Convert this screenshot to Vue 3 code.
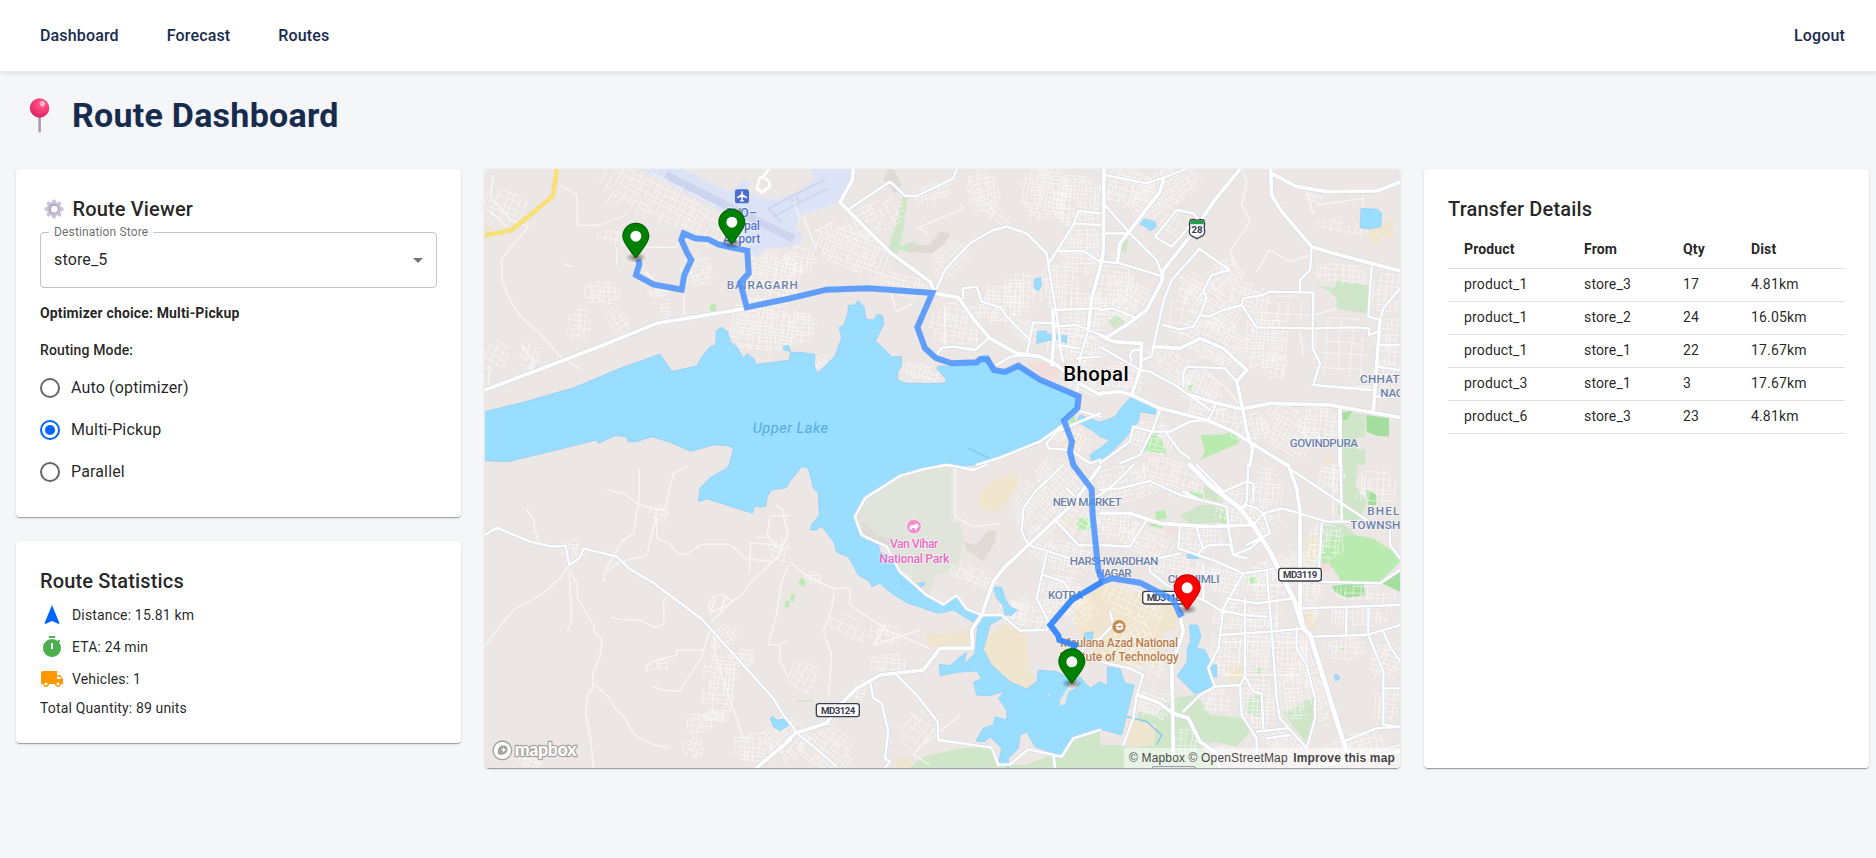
<script setup>
import { ref } from 'vue'

const mode = ref('multi')
const modes = [
  { id: 'auto', label: 'Auto (optimizer)' },
  { id: 'multi', label: 'Multi-Pickup' },
  { id: 'parallel', label: 'Parallel' },
]

const transfers = [
  ['product_1', 'store_3', '17', '4.81km'],
  ['product_1', 'store_2', '24', '16.05km'],
  ['product_1', 'store_1', '22', '17.67km'],
  ['product_3', 'store_1', '3', '17.67km'],
  ['product_6', 'store_3', '23', '4.81km'],
]

const pins = [
  { x: 427, y: 173, color: '#008000' },
  { x: 715, y: 131, color: '#008000' },
  { x: 1735, y: 1450, color: '#008000' },
  { x: 2081, y: 1228, color: '#ff0000' },
]

// Built-up areas: centre x, centre y, width, height, rotation in degrees, block size
const districts = [
  [560, 120, 420, 130, 27, 19], [75, 120, 120, 80, 20, 24], [400, 220, 90, 40, 10, 20],
  [370, 385, 110, 60, 4, 13], [650, 320, 90, 90, -15, 14], [540, 378, 70, 34, -12, 11],
  [415, 470, 90, 50, 60, 15], [560, 435, 28, 60, 3, 12], [300, 480, 70, 90, 5, 17],
  [55, 570, 70, 70, 30, 20], [150, 575, 60, 70, 20, 20],
  [850, 480, 190, 150, 8, 13], [885, 330, 160, 120, 15, 12], [965, 490, 80, 90, 5, 12],
  [1120, 260, 220, 120, 20, 14], [1180, 165, 190, 90, -25, 17], [960, 290, 90, 80, 10, 15],
  [1360, 85, 110, 50, -15, 15], [1510, 80, 90, 130, -12, 14], [1540, 140, 120, 40, 40, 16],
  [1260, 360, 160, 60, 14, 14], [1410, 285, 120, 90, -45, 14], [1430, 480, 150, 120, 10, 16],
  [1560, 420, 120, 110, 3, 13], [1620, 390, 90, 120, 1, 14], [1700, 85, 140, 150, 10, 11],
  [1790, 110, 140, 150, 5, 11], [1810, 260, 130, 130, 2, 13], [1740, 370, 110, 130, 4, 14],
  [1820, 450, 130, 130, 2, 14], [1790, 540, 170, 90, 8, 12], [1820, 640, 120, 90, 20, 11],
  [1320, 625, 110, 50, 20, 13], [1020, 600, 35, 60, 30, 10], [1640, 500, 90, 60, 30, 12],
  [1770, 820, 130, 80, 30, 14], [1940, 70, 160, 110, 15, 13], [2050, 75, 230, 110, -30, 11],
  [2080, 180, 110, 80, 33, 22], [1900, 380, 140, 150, 4, 13], [1960, 420, 110, 120, 30, 15],
  [1930, 640, 120, 90, 6, 12], [2110, 450, 80, 150, 10, 34], [2140, 370, 90, 80, 30, 15],
  [2240, 330, 110, 90, -30, 14], [2200, 430, 170, 110, 35, 12], [2310, 400, 120, 80, 18, 13],
  [2210, 530, 200, 120, 25, 13], [2360, 530, 120, 170, 4, 12], [2080, 600, 160, 80, 35, 14],
  [2160, 670, 120, 90, 25, 13], [2420, 440, 150, 90, 2, 42], [2390, 610, 60, 70, 10, 13],
  [2580, 560, 150, 200, 4, 44], [2590, 330, 160, 60, 4, 16], [2720, 380, 80, 130, 5, 16],
  [2720, 580, 70, 230, 5, 15], [2020, 820, 130, 90, 15, 14], [2310, 790, 110, 80, -10, 15],
  [2430, 800, 170, 120, 30, 13], [2520, 780, 120, 100, 5, 14], [2200, 740, 140, 70, 15, 14],
  [2600, 190, 180, 30, 10, 26], [2500, 95, 50, 40, 20, 14],
  [1240, 1240, 130, 60, 30, 17], [1480, 1235, 140, 50, 20, 14], [1000, 1240, 50, 40, 5, 17],
  [1110, 1390, 120, 60, 25, 26], [1220, 1410, 100, 60, 15, 18], [1230, 1500, 110, 60, 5, 15],
  [970, 1540, 90, 90, 30, 22], [1140, 1575, 40, 60, 20, 15],
  [1040, 1750, 160, 130, 38, 14], [920, 1720, 130, 110, 38, 14], [1310, 1700, 80, 110, 40, 22],
  [820, 1750, 110, 90, 5, 14], [720, 1560, 100, 170, 5, 18], [660, 1680, 80, 60, 5, 15],
  [710, 1655, 80, 26, 8, 9], [730, 1420, 60, 90, 55, 13], [790, 1480, 80, 50, 10, 15],
  [900, 1155, 70, 70, 20, 17], [540, 1045, 60, 50, 20, 15], [280, 1160, 70, 70, 5, 17],
  [150, 1790, 70, 40, 20, 12], [640, 1750, 60, 60, 20, 14], [550, 1500, 40, 40, 2, 16],
  [1670, 1030, 150, 130, 42, 14], [1740, 950, 150, 100, 42, 13], [1680, 1130, 90, 80, 40, 13],
  [1790, 1060, 110, 120, 38, 15], [1760, 1180, 140, 90, 15, 14], [1740, 1290, 130, 110, 10, 12],
  [1650, 1350, 120, 80, 10, 15], [1600, 1340, 80, 60, 20, 13], [1800, 1330, 90, 100, -40, 14],
  [1930, 960, 180, 110, -15, 14], [2080, 940, 190, 100, 15, 15], [1900, 1080, 150, 80, 5, 13],
  [2000, 1130, 170, 80, 20, 14], [2160, 1120, 130, 80, 5, 15], [2270, 1030, 110, 120, 15, 15],
  [2240, 1250, 130, 90, 10, 14], [2120, 1220, 190, 70, 10, 13], [2360, 1010, 90, 200, 5, 14],
  [2410, 1210, 80, 200, 65, 14], [2360, 1250, 110, 110, 5, 14], [2260, 1360, 110, 90, 5, 15],
  [2350, 1370, 110, 80, 3, 14], [2230, 1470, 100, 120, 3, 14], [2330, 1460, 100, 120, 3, 13],
  [2430, 1470, 100, 130, 3, 14], [2340, 1620, 100, 150, 3, 14], [2440, 1590, 80, 160, -6, 13],
  [2210, 1610, 80, 70, 4, 15], [2000, 1490, 110, 110, 20, 15], [2020, 1620, 110, 80, 20, 13],
  [1960, 1320, 190, 90, 25, 18], [1950, 1430, 170, 80, -30, 20],
  [2560, 940, 80, 80, 10, 15], [2500, 1250, 60, 220, 3, 13], [2540, 1130, 100, 100, 5, 15],
  [2660, 1290, 180, 50, 2, 18], [2640, 1355, 170, 60, 2, 17], [2600, 1450, 130, 60, 3, 15],
  [2720, 1490, 90, 110, 20, 15], [2500, 1550, 50, 280, -18, 13], [2620, 1750, 180, 80, -15, 15],
  [2420, 1740, 140, 80, 25, 14], [2270, 1780, 130, 50, 20, 15], [2720, 1620, 70, 100, 5, 17],
  [2690, 970, 120, 100, 3, 18], [2120, 1740, 70, 90, 5, 15],
]

let seed = 4711
const rand = () => {
  seed = (seed * 16807) % 2147483647
  return seed / 2147483647
}
const streetPath = districts
  .map(([cx, cy, w, h, deg, step]) => {
    const a = (deg * Math.PI) / 180
    const place = (u, v) =>
      `${(cx + u * Math.cos(a) - v * Math.sin(a)).toFixed(0)} ${(cy + u * Math.sin(a) + v * Math.cos(a)).toFixed(0)}`
    let d = ''
    const lay = (along, across, flip) => {
      for (let v = -across / 2; v <= across / 2; v += step * (0.6 + rand() * 0.7)) {
        const reach = Math.sqrt(Math.max(0.1, 1 - Math.pow((2 * v) / across, 2) * 0.6))
        let u = (-along / 2) * reach * (0.6 + rand() * 0.6)
        const end = (along / 2) * reach * (0.6 + rand() * 0.6)
        while (u < end) {
          const next = Math.min(end, u + step * (0.8 + rand() * 3.5))
          const dv = (rand() - 0.5) * 7
          d += flip ? `M${place(v, u)}L${place(v + dv, next)}` : `M${place(u, v)}L${place(next, v + dv)}`
          u = next + (rand() < 0.4 ? step * rand() * 2 : 0)
        }
      }
    }
    lay(w, h, false)
    lay(h, w, true)
    return d
  })
  .join('')

const lanes = [
  'M40 30L32 95L92 165L145 185L65 282V345L90 405L120 452L180 505L240 575L298 610',
  'M15 125L80 185M240 60L290 90L293 182L360 180L440 150M375 120L395 90M250 297L280 305M430 240L480 246L590 247L604 220M410 300V250',
  'M612 375V450M495 320L520 345M15 610L30 605L25 660M125 540L160 590L150 615',
  'M478 912V1000L460 1105L425 1130L372 1225V1250M382 975L430 985L480 1020L530 1035L555 1030L580 925L625 902M530 1060V1120L568 1135L593 1167H620L665 1138H748L795 1180L875 1190M372 1225L420 1190L500 1172L530 1050',
  'M15 1440L100 1335L190 1285L240 1240L268 1200M139 1033L162 1065L163 1095L180 1133M268 1210L290 1255L293 1300L340 1380L344 1403L367 1423L360 1475L340 1520L338 1570L322 1590L318 1650L333 1730L340 1808',
  'M268 1225L275 1360L262 1402M340 1555L385 1595L405 1630L435 1660L463 1710L520 1738L570 1750M395 1355L415 1363L480 1365L525 1388L552 1378L550 1310L562 1290',
  'M670 1455H590V1470L515 1490L497 1508L503 1520M512 1562Q545 1580 600 1578L665 1475L690 1395M700 1400L708 1480L790 1720L815 1710M755 1310L785 1290L815 1250L890 1180L925 1110L905 1030L887 1022M870 1052H930M870 1052L862 1110L890 1150M830 1117H862M805 1132L900 1142M812 1132L807 1228',
  'M925 1200L905 1250L888 1355L865 1438L900 1440L925 1425M900 1440V1485L925 1540M685 1330Q690 1290 725 1288L760 1310L700 1340ZM695 1370L755 1310M690 1350L705 1300M720 1340L740 1290',
  'M2285 12L2300 50L2285 120L2310 170L2250 260L2265 300M2368 255L2330 320M2368 255L2430 290L2490 270',
  'M930 1190L990 1240L1060 1270H1110V1320L1170 1360L1230 1400L1350 1450M1065 1270L1055 1330L1030 1400L1055 1470L1045 1600M1215 1380L1180 1440L1320 1395',
  'M1425 912V1055L1480 1085L1560 1075M1310 190L1450 130L1440 115M970 155L1010 255M960 160L940 110M1005 200L1060 170',
  'M1235 390L1250 440L1300 415M1395 420V540M1320 190L1345 210M2510 120L2650 100L2650 125M2500 150L2480 80',
  'M2520 665H2680M2505 450L2570 430M2460 500L2470 570M2150 600L2240 670L2280 720L2200 740M2560 900V1060M2650 1770L2760 1740',
  'M2300 1420V1560M2390 1300V1420M2480 1380V1570M2310 1260H2440M2210 1430H2470M2230 1530H2460',
  'M1440 1650L1330 1740M1290 1640L1320 1670M1365 1690L1300 1770L1350 1800',
]

const narrow = [
  'M1365 380L1398 310L1470 235L1540 195L1580 185L1640 205L1700 265L1708 320L1735 480L1742 560L1750 590',
  'M1110 130L1230 50L1275 92L1310 93L1420 40L1430 12',
  'M1450 400L1448 370L1490 365L1505 410L1562 428L1580 455L1645 520',
  'M1640 570L1660 472L1730 475M1720 435L1800 432L1860 430M1720 485L1790 480L1860 510',
  'M1710 290L1780 180L1795 138L1860 145M1735 258L1810 258L1860 290M1780 175L1860 180M1825 495L1800 580L1792 680',
  'M1370 570L1385 548L1420 545L1485 555L1525 520M1550 600L1590 575L1650 570M1735 540L1800 550M1790 580L1860 575',
  'M1490 900L1560 878L1680 830L1750 780L1790 735L1862 755M1700 835L1730 800L1800 770L1860 745M1700 835L1705 850L1770 855L1830 895L1860 885',
  'M1875 30L2000 55L2050 38L2120 12M1870 290L1920 295L2050 335M1875 120L1950 205L2030 285L2050 340M1870 205H1940',
  'M2160 250L2075 345L2050 410L2020 545L2015 575L1985 585',
  'M2155 250L2250 315L2195 330L2170 375L2180 400L2160 450L2140 485L2100 493L2050 480',
  'M2160 450L2185 455L2230 435L2285 420L2290 400L2350 390L2365 380L2500 383',
  'M2285 420L2330 487L2500 490L2620 487L2667 490V510L2695 500',
  'M2495 245L2490 315L2460 345V380M2500 383L2498 550L2520 595L2500 660L2675 675M2675 305L2665 455L2700 465L2710 430L2760 370M2697 540H2760M2690 605L2760 615M2685 695H2760',
  'M2110 665V625L2120 605L2235 610L2270 650M1860 545L1920 580L1980 615L2010 620L2085 660L2190 735',
  'M2185 765L2210 715M2040 735L2020 790L1980 870L1920 895M1860 895L1950 830L1960 785L2015 800L2070 800L2130 770L2180 765M2060 805L2100 860L2130 880',
  'M1860 435L1900 430L1970 460M2025 215L2090 135L2140 145L2170 180M2025 215L2075 245L2140 170M1950 570L1960 555H1985M1950 570L1955 590',
  'M1750 900L1665 980L1630 1030L1625 1100L1645 1140M1645 1140L1770 1180L1860 1200M1700 1165L1670 1300L1710 1380M1690 1230L1750 1250L1770 1280M1730 1070L1795 1140L1850 1142',
  'M1520 900L1480 915L1430 905L1400 900L1330 913L1260 933L1155 1000L1125 1055L1145 1110L1220 1145L1260 1220L1340 1290L1390 1318L1430 1290L1460 1332L1505 1350L1565 1350L1620 1397L1700 1395L1710 1380',
  'M1250 1530L1310 1590L1373 1670L1375 1725L1535 1748L1555 1800L1590 1798L1645 1753L1745 1775L1780 1720L1860 1695',
  'M1170 1550L1180 1600L1205 1615L1225 1700L1215 1780L1230 1790L1215 1808M1720 1770L1725 1808M930 1670L950 1705L990 1735L1070 1805',
  'M15 1110L50 1088L150 1130L215 1145L257 1142L268 1200L300 1178L310 1150L410 1175L450 1213L515 1250L665 1362L880 1600L910 1650L930 1675',
  'M1760 970L1800 1010L1850 1030M1795 1010L1860 990M1860 975L1920 970L2010 948L2100 990L2180 1010L2240 1025L2245 1080',
  'M1860 990L1900 960L1960 900M2150 1000L2110 980M2150 900L2190 940L2230 980L2300 950M2305 900L2300 1010L2280 1035M2300 950L2320 955V1010',
  'M2350 1045L2405 1030L2460 1045L2540 1070H2660M2435 915L2660 1065M2582 900L2585 1065M2525 1075L2515 1250L2700 1255L2760 1215',
  'M2465 1330L2760 1320M2475 1395L2495 1415L2660 1410L2760 1380M2600 1330L2598 1410M2665 1330V1410L2710 1520V1680L2760 1685M2710 1400L2730 1445L2760 1490M2590 1730L2690 1690L2760 1685M2710 1570H2760M2730 1090V1140L2760 1180',
  'M2220 1410L2370 1400L2470 1390M2240 1300L2330 1315L2440 1300M2290 1225L2380 1212M2290 1225L2230 1330L2215 1450L2185 1510L2205 1565L2280 1560L2295 1535V1300',
  'M2110 1640L2160 1590L2205 1565M2280 1560L2285 1650L2330 1720V1808M2295 1535L2320 1580L2345 1585L2350 1690M2360 1220L2375 1400L2390 1600L2400 1660L2480 1750L2505 1660V1600L2480 1500L2450 1450V1390M2330 1700L2420 1690M2360 1720L2430 1710',
  'M2100 1080L2095 1150L2140 1165L2210 1190L2290 1225M2150 1085L2160 1125L2170 1150L2150 1170M2170 1150L2190 1140L2250 1138L2260 1170L2300 1180M2245 1090L2260 1170L2310 1150L2350 1115M2180 1310L2220 1335L2290 1350L2360 1355M2010 1185L2100 1165M2010 1185V1220L2060 1260L2180 1310',
  'M2280 1035L2300 1020L2330 1030L2350 1045L2320 1080M2350 1045L2370 1105L2300 1140M1860 1140L1950 1145L2000 1065M2170 1200V1300',
  'M1990 1530L1970 1590L1960 1660L1930 1740M1860 1490L1950 1510L1990 1530M1790 1500L1810 1450L1860 1420L1900 1380L1890 1340',
]

const wide = [
  'M15 675L200 605L370 540L530 475L800 430',
  'M1120 12L1117 45L1080 112L1230 262L1350 350L1365 385L1435 398L1485 468L1530 520L1610 565L1680 575L1730 600L1790 650L1860 690',
  'M1715 600L1722 520L1718 435M1825 490L1835 400L1860 310L1870 260L1872 12',
  'M2050 45L2040 80L1920 235L1912 290M2280 12L2200 110L2130 215L2050 315L2045 350L2000 435L1940 480L1875 520',
  'M1860 510L1900 530L1985 535L1982 610L1955 690L1920 680L1860 685',
  'M2372 12L2375 90L2405 140L2495 245L2560 265L2760 318M2375 25L2450 65L2540 80L2690 78L2760 52',
  'M2700 465L2680 740M2020 545L2100 550L2160 520L2230 550L2300 615L2270 650L2290 740L2300 800L2318 850L2310 900',
  'M1955 690L2040 730L2180 765L2260 800L2420 900M2130 690L2210 715L2285 732L2370 715L2550 720L2760 757M2580 735V900',
  'M2425 900L2450 970L2460 1040V1330L2470 1380M1860 1045L1950 1045L2040 1075L2180 1085L2320 1080',
  'M1975 1590L2040 1615L2078 1645L2125 1660L2160 1730L2205 1760L2220 1808M2078 1645L2080 1780M2078 1640L2075 1500L2110 1400L2100 1355L2080 1300',
  'M2500 1808L2640 1780L2760 1760M830 1808L930 1725M1860 905L1780 1015L1645 1140L1570 1210L1540 1250L1505 1350L1475 1395L1478 1450L1380 1450L1330 1515L1200 1530L1130 1570L1080 1620L1040 1675L945 1705L920 1730',
]

const rail = 'M2130 900L2190 960L2280 1030L2320 1080L2370 1160L2440 1300L2470 1390L2490 1410L2590 1730L2605 1770'

const mainRoute =
  'M475 283L478 297L468 330L520 358L605 374L613 330L634 285L622 265L604 225L611 205L645 220L685 223L715 238L755 248L802 257L806 325L781 353L800 427L930 400L1040 374L1165 370L1357 384L1312 487L1335 550L1368 579L1415 595L1490 592L1500 583L1522 583L1542 615L1575 621L1615 602L1680 644L1796 694L1792 730L1752 767L1776 830L1770 860L1780 900L1835 972L1838 1050L1855 1215L1868 1250'
const branchRoute = 'M1868 1250L1775 1305L1711 1380L1735 1412L1738 1425L1785 1440L1778 1455'
const lastLeg = 'M1868 1250L1895 1240L1980 1253L2080 1305L2100 1348L2110 1342'
</script>

<template>
  <div class="page">
    <nav class="topbar">
      <a>Dashboard</a>
      <a>Forecast</a>
      <a>Routes</a>
      <a class="logout">Logout</a>
    </nav>

    <h1 class="title">
      <svg class="pushpin" viewBox="0 0 20 35">
        <defs>
          <radialGradient id="pinHead" cx=".62" cy=".28" r=".75">
            <stop offset="0" stop-color="#ff9fc0" />
            <stop offset=".25" stop-color="#ff4d84" />
            <stop offset=".7" stop-color="#f0316f" />
            <stop offset="1" stop-color="#c52a63" />
          </radialGradient>
        </defs>
        <rect x="8.3" y="17" width="2.6" height="17.5" rx="1.2" fill="#a99bb5" />
        <circle cx="9.6" cy="10" r="9.7" fill="url(#pinHead)" />
        <ellipse cx="12.6" cy="5.8" rx="2.4" ry="2.8" fill="#ffc4d8" opacity=".85" />
      </svg>
      <span>Route Dashboard</span>
    </h1>

    <main class="grid">
      <div class="side">
        <section class="card viewer">
          <h2>
            <svg class="gear" viewBox="0 0 20 20">
              <g fill="#cfc6dc">
                <rect v-for="n in 4" :key="n" x="8" y=".4" width="4" height="19.2" rx="1.8" :transform="`rotate(${n * 45} 10 10)`" />
              </g>
              <circle cx="10" cy="10" r="7" fill="#c8bed6" />
              <circle cx="10" cy="10" r="4.800" fill="#a99fba" />
              <circle cx="10.3" cy="10.2" r="3.4" fill="#fff" />
            </svg>
            <span>Route Viewer</span>
          </h2>
          <div class="select">
            <label>Destination Store</label>
            <span>store_5</span>
            <svg viewBox="0 0 24 24"><path d="M7 10l5 5 5-5z" fill="#757575" /></svg>
          </div>
          <p class="strong choice">Optimizer choice: Multi-Pickup</p>
          <p class="strong routing">Routing Mode:</p>
          <div class="radios">
            <div v-for="m in modes" :key="m.id" class="radio" :class="{ on: mode === m.id }" @click="mode = m.id">
              <svg viewBox="0 0 24 24">
                <circle cx="12" cy="12" r="9" fill="none" stroke="currentColor" stroke-width="2" />
                <circle v-if="mode === m.id" cx="12" cy="12" r="5" fill="currentColor" />
              </svg>
              <span>{{ m.label }}</span>
            </div>
          </div>
        </section>

        <section class="card stats">
          <h2>Route Statistics</h2>
          <div class="stat">
            <svg viewBox="0 0 24 24"><path fill="#0065ff" d="M12 2L4.5 20.29l.71.71L12 18l6.79 3 .71-.71z" /></svg>
            <span>Distance: 15.81 km</span>
          </div>
          <div class="stat">
            <svg viewBox="0 0 24 24"><path fill="#4caf50" d="M9 1h6v2H9zM19.03 7.39l1.42-1.42c-.43-.51-.9-.99-1.41-1.41l-1.42 1.42C16.07 4.74 14.12 4 12 4c-4.97 0-9 4.03-9 9s4.02 9 9 9 9-4.03 9-9c0-2.12-.74-4.07-1.97-5.61zM13 14h-2V8h2v6z" /></svg>
            <span>ETA: 24 min</span>
          </div>
          <div class="stat">
            <svg viewBox="0 0 24 24"><path fill="#ff9800" d="M20 8h-3V4H3c-1.1 0-2 .9-2 2v11h2c0 1.66 1.34 3 3 3s3-1.34 3-3h6c0 1.66 1.34 3 3 3s3-1.34 3-3h2v-5l-3-4zM6 18.5c-.83 0-1.5-.67-1.5-1.5s.67-1.5 1.5-1.5 1.5.67 1.5 1.5-.67 1.5-1.5 1.5zm13.5-9l1.96 2.5H17V9.5h2.5zm-1.5 9c-.83 0-1.5-.67-1.5-1.5s.67-1.5 1.5-1.5 1.5.67 1.5 1.5-.67 1.5-1.5 1.5z" /></svg>
            <span>Vehicles: 1</span>
          </div>
          <p class="total">Total Quantity: 89 units</p>
        </section>
      </div>

      <section class="card map">
        <svg class="canvas" viewBox="15 12 2745 1797" preserveAspectRatio="none">
          <defs>
            <radialGradient id="pinShadow">
              <stop offset="0" stop-opacity=".5" />
              <stop offset="1" stop-opacity="0" />
            </radialGradient>
          </defs>
          <rect x="15" y="12" width="2745" height="1797" fill="#ece7e4" />

          <g fill="#dde3f6">
            <path d="M480 12H610L750 82L792 42L812 50L802 80L868 106L950 84L1005 42L992 12H1117L1112 50L1080 112L955 152L950 190L965 205V232L930 245L848 252L830 280L770 200L735 145Z" />
          </g>
          <g fill="none" stroke="#cdd5ee" stroke-width="9">
            <path d="M558 30L940 222" stroke-width="24" />
            <path d="M860 135L945 88L1035 45M880 155L945 120L1045 70M865 130L905 172M945 88L960 115M935 100L950 130" stroke-width="5" />
          </g>

          <g fill="#cfe6c9">
            <path d="M1270 95H1284L1268 205L1252 270L1225 255ZM1245 250L1300 228L1325 245L1290 262Z" />
            <path d="M2508 363L2565 368V346L2665 362V447L2570 430V400L2545 375Z" />
            <path d="M2585 740L2655 750V815L2630 820V853H2658V820L2655 900H2588ZM2590 900H2630V970L2660 1010L2640 1065H2590ZM2525 1080L2590 1078L2630 1110L2600 1150L2560 1170L2530 1150Z" />
            <path d="M2070 1600L2150 1590L2190 1650L2300 1660L2310 1700L2270 1745L2200 1730L2160 1740L2200 1790L2230 1808H1860V1740L1960 1740L1975 1640L2030 1650ZM2300 1600L2345 1585L2348 1660L2300 1645ZM2410 1640L2500 1595L2510 1650L2480 1740Z" />
            <path d="M1290 1808L1330 1775L1440 1750L1535 1748L1560 1800H1640L1710 1770L1780 1720L1860 1695V1808ZM1918 220L1945 225L1940 265L1925 262ZM1885 470L1910 448L1935 470L1905 492Z" />
            <path d="M2100 1050L2160 1020L2245 1020L2230 1070L2130 1078ZM2170 960L2220 990L2230 1015L2175 1000ZM950 1605H1000V1610H950Z" />
          </g>
          <path d="M1230 933L1330 913L1415 905V1070L1440 1075L1452 1115L1430 1220L1365 1230L1350 1290L1280 1250L1225 1150L1145 1110L1125 1055L1155 1000Z" fill="#e0e4da" />
          <path d="M1148 1070L1190 1110L1240 1120L1225 1145L1150 1115ZM1210 42L1225 12H1240L1265 60L1245 85ZM1290 240H1350L1380 200L1412 205L1390 240L1360 265L1290 262ZM1450 1130L1490 1140L1520 1100L1550 1095L1545 1130L1510 1190L1460 1155Z" fill="#dfdad4" />
          <g fill="#b9eab0">
            <path d="M2000 815L2030 805L2060 850L2058 865L1990 860ZM2162 810L2230 808L2270 795L2277 835L2160 885L2175 860ZM2550 1120L2620 1110L2680 1120L2740 1160L2760 1190L2700 1250L2590 1260L2560 1210L2520 1190L2530 1140Z" />
            <path d="M1960 1320L1990 1280L2060 1270L2040 1330L1985 1350L1960 1370ZM2130 975L2170 985L2168 1000L2135 990ZM2000 1080L2060 1070L2045 1090ZM2220 1070L2245 1020L2250 1070L2230 1080ZM1793 1060H1835V1095H1793ZM690 420L708 417V437H690ZM915 1307H928V1327H915ZM955 1255L963 1238L977 1245L972 1265ZM932 1290L945 1287L940 1310H932ZM2575 1020H2590V1050H2575ZM2125 660H2137V675H2125ZM2025 1040L2055 1035L2060 1060L2030 1065ZM1762 760L1785 750V780H1765ZM2300 1240L2330 1236V1255H2315ZM2330 1510H2342V1525H2330ZM2580 1450H2592V1458H2580Z" />
          </g>
          <path d="M2658 750L2727 760V815L2690 812L2660 800ZM2660 975L2690 990V1020L2665 1020ZM2555 1262L2650 1255L2655 1290L2600 1300L2565 1280ZM2700 1252L2760 1215V1280ZM2585 742L2617 738L2600 765H2588Z" fill="#a5dfa0" />
          <g fill="#f0e5cf">
            <path d="M1495 990L1530 950L1610 920L1615 960L1560 1040L1500 1035ZM1340 1400L1390 1410L1470 1390L1480 1445H1345ZM1520 1420L1570 1375L1640 1400L1645 1500L1670 1560L1660 1600L1590 1560L1510 1480ZM1780 1300L1860 1255L1960 1280L2090 1310L2090 1390L2050 1400L2040 1500L1870 1500L1820 1430L1790 1400ZM1740 850L1760 820L1815 830L1780 855ZM2655 205L2720 170L2740 168L2738 215L2700 215L2690 238ZM15 180H35L30 200H15ZM1945 1660L2030 1680L2020 1740L1940 1750ZM2480 1120L2515 1110L2510 1180L2470 1200ZM2240 1510L2290 1500V1545L2245 1550ZM2475 1335L2500 1340L2508 1390L2480 1395ZM1250 1780H1300L1290 1808H1245ZM1745 1065L1755 1050L1775 1065L1765 1090ZM2535 875L2557 880L2550 900H2532Z" />
          </g>
          <path d="M1640 595L1720 590L1742 615L1725 645L1690 640ZM1955 645L1975 640L1965 665H1950ZM2055 1090L2100 1085V1105H2060ZM2520 1200L2550 1190L2555 1220H2515Z" fill="#f3dedc" />

          <path :d="streetPath" fill="none" stroke="#fff" stroke-width="3" opacity=".56" />
          <path :d="lanes.join('')" fill="none" stroke="#fff" stroke-width="4" opacity=".68" stroke-linejoin="round" />

          <g fill="#99ddff" stroke="#8fc8fa" stroke-width="2">
            <path d="M10 741L130 712L285 667L420 610L540 567L575 619L650 603L668 572L690 545L707 540L709 497L724 487L743 500L752 532L770 545L790 578L802 566L822 582L827 598L880 592L928 585L932 562L960 562L1005 568L1003 600L1012 625L1040 598L1065 573L1085 517L1077 488L1090 483L1103 448L1105 420L1120 422L1135 407L1152 425L1158 462L1182 465L1192 447L1207 452L1212 475L1187 527L1235 575H1265V605L1253 620V645L1280 655H1390L1400 645L1370 610L1375 603H1440L1490 595L1505 572L1525 570L1545 615L1575 620L1615 600L1680 645L1790 695L1792 725L1752 765L1740 780L1685 820L1670 840L1550 880L1490 900L1400 905L1330 913L1260 933L1155 1000L1125 1055L1145 1110L1195 1140L1200 1160L1250 1190L1260 1220L1340 1290L1390 1318L1430 1290L1460 1332L1505 1350L1480 1372L1420 1335L1375 1345L1280 1313L1235 1285L1200 1255L1175 1265L1170 1250L1135 1230L1105 1175L1070 1162L1062 1132L1025 1083L1008 1095L992 1095L995 1078L1018 1050L1015 985L1000 970L985 910L965 905L925 955L920 968L875 975L862 995L857 1025H823L818 1045L682 1002L655 1010L660 970L690 938L740 910L747 900L760 850L745 842L700 840L632 859L570 832L515 815L470 830H443L440 815L405 812L355 835L350 825L250 850L85 890L10 887Z" />
            <path d="M1495 1365L1515 1350L1570 1356L1530 1380L1510 1455L1535 1500L1590 1550L1640 1572L1670 1550L1675 1515L1730 1520L1780 1545L1800 1535L1830 1570L1860 1550L1882 1562V1505L1920 1512L1935 1555L1963 1560L1925 1710L1860 1692L1780 1720L1745 1770L1720 1765L1665 1745L1640 1700L1620 1710L1615 1750L1585 1780V1808L1555 1795L1565 1750L1530 1715L1515 1730L1488 1728L1510 1690L1540 1680L1545 1655L1580 1665V1635L1555 1600L1575 1578L1530 1592L1490 1590L1480 1552L1505 1540L1490 1518L1430 1522L1380 1532L1378 1498L1410 1502L1435 1480L1460 1462L1450 1500L1485 1465Z" />
            <path d="M1540 1265L1565 1268L1575 1300L1590 1325L1612 1335L1595 1350L1575 1350L1568 1320L1550 1300ZM1260 1248L1285 1262L1335 1252L1330 1262L1275 1275Z" />
            <path d="M1860 772L1905 755L1930 720L1953 697L1995 705L2028 735L2025 748L1980 740L1975 770L1935 820L1890 865L1860 885L1838 895L1830 870L1860 850L1890 825L1860 815L1835 795L1790 770L1800 750Z" />
            <path d="M1663 343L1682 338L1685 360L1675 378L1662 368ZM1672 500L1700 497V507L1760 512V535L1730 522L1690 530L1670 535Z" />
            <path d="M1980 178L1993 162L2025 170L2028 185L2010 198L1998 186ZM2643 130L2693 133L2705 145L2702 185L2670 192L2640 188Z" />
            <path d="M2128 1380H2153L2163 1415L2150 1450L2175 1455L2195 1500H2210V1535H2200L2205 1560L2145 1588L2092 1532L2122 1490V1450L2132 1430Z" />
            <path d="M870 1660L880 1655L890 1665L915 1663L925 1682L900 1697L880 1685ZM2122 1168H2155V1180H2122ZM2563 1530L2572 1528L2580 1540L2567 1548ZM910 545L925 540L932 560L912 555ZM1812 1405L1840 1400L1835 1430L1812 1425Z" />
          </g>
          <path d="M1740 1608L1770 1555L1800 1545L1785 1570L1765 1580L1755 1618L1740 1622ZM1700 1590L1710 1586L1708 1592Z" fill="#ece7e4" />
          <path d="M1465 850L1530 880M1940 1655L2000 1670L2045 1710L2030 1740" fill="none" stroke="#7fc6f4" stroke-width="4" />

          <g fill="none" stroke-linejoin="round" stroke-linecap="round">
            <path :d="narrow.join('')" stroke="#d6dce9" stroke-width="11" />
            <path :d="wide.join('')" stroke="#d3d9e7" stroke-width="15" />
            <path :d="rail" stroke="#d3d9e7" stroke-width="19" />
            <path d="M232 5L219 92L145 155L92 196L10 212" stroke="#eedc8c" stroke-width="14" />
            <path :d="narrow.join('')" stroke="#fff" stroke-width="7" />
            <path :d="wide.join('')" stroke="#fff" stroke-width="11" />
            <path :d="rail" stroke="#fff" stroke-width="15" />
            <path d="M232 5L219 92L145 155L92 196L10 212" stroke="#fae272" stroke-width="10" />
            <path d="M880 -5L850 35L840 38L830 70L845 82L870 65L868 50L848 35" stroke="#fff" stroke-width="8" />
          </g>

          <g class="labels">
            <g class="halo" fill="#5572cc" font-size="37" font-weight="500" text-anchor="middle">
              <text x="785" y="155" textLength="92">BHO –</text>
              <text x="785" y="195" textLength="110">Bhopal</text>
              <text x="785" y="235" textLength="112">Airport</text>
            </g>
            <g class="halo" fill="#6b80a8" font-size="35" font-weight="500">
              <text x="740" y="373" textLength="213">BAIRAGARH</text>
              <text x="1718" y="1024" textLength="207">NEW MARKET</text>
              <text x="1769" y="1200" textLength="266">HARSHWARDHAN</text>
              <text x="1849" y="1237" textLength="106">NAGAR</text>
              <text x="1704" y="1303" textLength="105">KOTRA</text>
              <text x="2063" y="1253" textLength="156">CHUNIMLI</text>
              <text x="2429" y="845" textLength="205">GOVINDPURA</text>
              <text x="2640" y="655" textLength="119">CHHAT</text>
              <text x="2701" y="695" textLength="70">NAG</text>
              <text x="2662" y="1051" textLength="96">BHEL</text>
              <text x="2611" y="1092" textLength="150">TOWNSH</text>
            </g>
            <text x="818" y="803" fill="#55ace0" font-size="44" font-style="italic" textLength="226">Upper Lake</text>
            <g class="halo" fill="#e96bc4" font-size="37" font-weight="500">
              <text x="1230" y="1149" textLength="145">Van Vihar</text>
              <text x="1198" y="1193" textLength="210">National Park</text>
            </g>
            <g class="halo" fill="#b77d4b" font-size="36" font-weight="500">
              <text x="1741" y="1445" textLength="353">Maulana Azad National</text>
              <text x="1738" y="1488" textLength="358">Institute of Technology</text>
            </g>
            <text class="halo" x="1750" y="648" fill="#000" font-size="61" font-weight="500" textLength="196">Bhopal</text>
          </g>

          <g transform="translate(765 73)">
            <rect width="42" height="42" rx="8" fill="#4c6cd2" />
            <path d="M21 5C18.500 5 18.500 11 18.500 15L6 23V27L18.500 23L19 31L14.500 35V37.500L21 36L27.500 37.500V35L23 31L23.500 23L36 27V23L23.500 15C23.500 11 23.500 5 21 5Z" fill="#fff" />
          </g>
          <g transform="translate(1302 1085)">
            <circle r="22" fill="#ef8fcf" stroke="#fff" stroke-width="2" />
            <path d="M-15 10L-13 0L-10 -4H0L5 -9H10L14 -4L13 2L8 4V10H3L2 4H-5L-8 10H-12L-11 3Z" fill="#fff" />
          </g>
          <g transform="translate(1917 1385)">
            <circle r="21" fill="#c48a55" stroke="#f5e8d8" stroke-width="2" />
            <path d="M-13 -5L2 -12L13 -8V8L4 11H-7L-10 2V-3ZM-7 -1L3 2L10 -3" fill="#fff" stroke="#c48a55" stroke-width="2" />
          </g>
          <g transform="translate(2151 192)">
            <path d="M-20 -27L-10 -29L0 -26L10 -29L20 -27L23 -15Q20 -8 23 5Q24 20 9 24L0 29L-9 24Q-24 20 -23 5Q-20 -8 -23 -15Z" fill="#fff" stroke="#3b3c4c" stroke-width="4" />
            <path d="M-19 -25L-10 -27L0 -24L10 -27L19 -25L20 -14H-20Z" fill="#1aa04a" />
            <text y="12" text-anchor="middle" font-family="Roboto, sans-serif" font-size="29" font-weight="700" fill="#34364a" textLength="33">28</text>
          </g>
          <g class="shield">
            <g transform="translate(1009 1616)"><rect width="129" height="39" rx="8" /><text x="14" y="30" textLength="103">MD3124</text></g>
            <g transform="translate(2396 1210)"><rect width="128" height="38" rx="8" /><text x="13" y="29" textLength="103">MD3119</text></g>
            <g transform="translate(1988 1279)"><rect width="128" height="38" rx="8" /><text x="12" y="29" textLength="103">MD3118</text></g>
            <rect x="2017" y="1805" width="130" height="38" rx="8" />
          </g>

          <g fill="none" stroke-width="18" stroke-linejoin="miter">
            <path :d="mainRoute" stroke="#4690ff" stroke-opacity=".84" />
            <path :d="branchRoute" stroke="#2f84ff" stroke-opacity=".92" />
            <path :d="lastLeg" stroke="#4690ff" stroke-opacity=".84" />
          </g>

          <g v-for="pin in pins" :key="pin.x" :transform="`translate(${pin.x} ${pin.y}) scale(3)`">
            <ellipse cx="13.5" cy="34.8" rx="10.5" ry="5.25" fill="url(#pinShadow)" />
            <path :fill="pin.color" d="M27 13.500C27 19.074 20.250 27 14.750 34.500C14.016 35.500 12.984 35.500 12.250 34.500C6.750 27 0 19.223 0 13.500C0 6.044 6.044 0 13.500 0C20.956 0 27 6.044 27 13.500Z" />
            <path opacity=".25" d="M13.500 0C6.044 0 0 6.044 0 13.500C0 19.223 6.750 27 12.250 34.500C13 35.520 14.016 35.500 14.750 34.500C20.250 27 27 19.074 27 13.500C27 6.044 20.956 0 13.500 0ZM13.500 1C20.415 1 26 6.585 26 13.500C26 15.899 24.495 19.218 22.220 22.738C19.945 26.259 16.705 29.948 13.943 33.906C13.743 34.180 13.625 34.322 13.500 34.445C13.375 34.322 13.257 34.180 13.057 33.906C10.284 29.991 7.315 26.314 4.818 22.777C2.322 19.240 1 15.954 1 13.500C1 6.585 6.585 1 13.500 1Z" />
            <circle cx="13.500" cy="13.500" r="5.500" fill="#fff" />
          </g>

          <g transform="translate(67 1756)">
            <circle r="28" fill="#fff" stroke="#a5a19f" stroke-width="4" />
            <path d="M-12 13C-16 0 -12 -13 2 -15C14 -15 19 -4 14 4C9 12 -2 14 -12 13Z" fill="#a5a19f" />
            <path d="M4 -10L6.500 -4L12 -1.500L6.500 1L4 7L1.500 1L-4 -1.500L1.500 -4Z" fill="#fff" />
          </g>
          <text class="wordmark" x="104" y="1772" textLength="186">mapbox</text>
        </svg>
        <div class="attribution">© Mapbox © OpenStreetMap <b>Improve this map</b></div>
      </section>

      <section class="card details">
        <h2>Transfer Details</h2>
        <table>
          <colgroup>
            <col class="c1" /><col class="c2" /><col class="c3" /><col class="c4" />
          </colgroup>
          <thead>
            <tr><th>Product</th><th>From</th><th>Qty</th><th>Dist</th></tr>
          </thead>
          <tbody>
            <tr v-for="(row, i) in transfers" :key="i">
              <td v-for="cell in row" :key="cell">{{ cell }}</td>
            </tr>
          </tbody>
        </table>
      </section>
    </main>
  </div>
</template>

<style>
body {
  background: #f4f6f8;
  overflow: hidden;
}
</style>

<style scoped>
.page {
  height: 858px;
  background: #f4f6f8;
  font-family: Roboto, sans-serif;
  color: rgba(0, 0, 0, 0.87);
}
.topbar {
  display: flex;
  align-items: center;
  gap: 48px;
  box-sizing: border-box;
  height: 72px;
  padding: 0 31px 0 40px;
  background: #fff;
  border-bottom: 1px solid #e3e6e9;
  box-shadow: 0 2px 4px rgba(0, 0, 0, 0.08);
  font-size: 16px;
  font-weight: 500;
  letter-spacing: 0.15px;
  color: #172b4d;
}
.logout {
  margin-left: auto;
}
.title {
  display: flex;
  align-items: center;
  height: 42px;
  margin: 22px 0 33px 30px;
  font-size: 34px;
  font-weight: 700;
  letter-spacing: 0.25px;
  color: #172b4d;
}
.pushpin {
  width: 20px;
  height: 35px;
  margin-right: 22px;
}
.grid {
  display: grid;
  grid-template-columns: 445px 915px 445px;
  gap: 24px;
  height: 599px;
  padding-left: 16px;
}
.side {
  display: flex;
  flex-direction: column;
  gap: 24px;
}
.card {
  box-sizing: border-box;
  padding: 24px;
  border-radius: 4px;
  background: #fff;
  box-shadow: 0 2px 1px -1px rgba(0, 0, 0, 0.2), 0 1px 1px rgba(0, 0, 0, 0.14), 0 1px 3px rgba(0, 0, 0, 0.12);
}
.viewer {
  height: 348px;
}
.stats {
  height: 202px;
}
h2 {
  display: flex;
  align-items: center;
  height: 32px;
  margin: 0;
  font-size: 20px;
  font-weight: 500;
  letter-spacing: 0.15px;
}
.gear {
  width: 20px;
  height: 20px;
  margin: 0 9px 0 3.500px;
}
.select {
  position: relative;
  display: flex;
  align-items: center;
  justify-content: space-between;
  box-sizing: border-box;
  height: 56px;
  margin-top: 7px;
  padding: 0 6px 1px 13px;
  border: 1px solid #c4c4c4;
  border-radius: 4px;
  font-size: 16px;
  letter-spacing: 0.15px;
}
.select label {
  position: absolute;
  top: -8px;
  left: 8px;
  padding: 0 5px;
  background: #fff;
  font-size: 12px;
  line-height: 14px;
  color: rgba(0, 0, 0, 0.6);
}
.select svg {
  width: 24px;
  height: 24px;
}
p {
  margin: 0;
  font-size: 14px;
  line-height: 20px;
  letter-spacing: 0.15px;
}
.strong {
  font-weight: 700;
}
.choice {
  margin-top: 15px;
}
.routing {
  margin-top: 17px;
  font-weight: 500;
}
.radios {
  margin-top: 7px;
}
.radio {
  display: flex;
  align-items: center;
  height: 42px;
  margin-left: -2px;
  font-size: 16px;
  letter-spacing: 0.15px;
}
.radio span {
  padding-bottom: 1px;
}
.radio svg {
  width: 24px;
  height: 24px;
  margin-right: 9px;
  color: rgba(0, 0, 0, 0.6);
}
.radio.on svg {
  color: #0065ff;
}
.stats h2 {
  margin-bottom: 6px;
}
.stat {
  display: flex;
  align-items: center;
  gap: 8px;
  height: 24px;
  margin-bottom: 8px;
  font-size: 14px;
  letter-spacing: 0.15px;
}
.stat svg {
  width: 24px;
  height: 24px;
}
.stat span {
  padding-bottom: 1px;
}
.total {
  margin-top: -1px;
}
.map {
  position: relative;
  padding: 0;
  overflow: hidden;
}
.canvas {
  display: block;
  width: 915px;
  height: 599px;
}
.labels {
  font-family: Roboto, "Noto Sans", sans-serif;
}
.halo {
  stroke: rgba(255, 255, 255, 0.6);
  stroke-width: 5px;
  paint-order: stroke;
  stroke-linejoin: round;
}
.shield rect {
  fill: #fff;
  stroke: #3b3c4c;
  stroke-width: 4px;
}
.shield text {
  font-family: Roboto, sans-serif;
  font-size: 29px;
  font-weight: 700;
  fill: #3b3c4c;
}
.wordmark {
  font-family: Lato, sans-serif;
  font-size: 54px;
  font-weight: 900;
  fill: #fff;
  stroke: #a5a19f;
  stroke-width: 7px;
  paint-order: stroke;
  stroke-linejoin: round;
}
.attribution {
  position: absolute;
  right: 0;
  bottom: 0;
  padding: 0 5px;
  background: rgba(255, 255, 255, 0.5);
  font: 12px/20px "Liberation Sans", sans-serif;
  letter-spacing: 0.15px;
  color: rgba(0, 0, 0, 0.75);
}
.attribution b {
  margin-left: 2px;
}
table {
  width: 397px;
  margin-top: 6px;
  table-layout: fixed;
  border-collapse: collapse;
  font-size: 14px;
  letter-spacing: 0.15px;
}
.c1 {
  width: 120px;
}
.c2 {
  width: 99px;
}
.c3 {
  width: 68px;
}
.c4 {
  width: 110px;
}
th,
td {
  box-sizing: border-box;
  height: 33px;
  padding: 0 0 1px 16px;
  border-bottom: 1px solid #e0e0e0;
  text-align: left;
}
th {
  height: 37px;
  font-weight: 700;
}
</style>
